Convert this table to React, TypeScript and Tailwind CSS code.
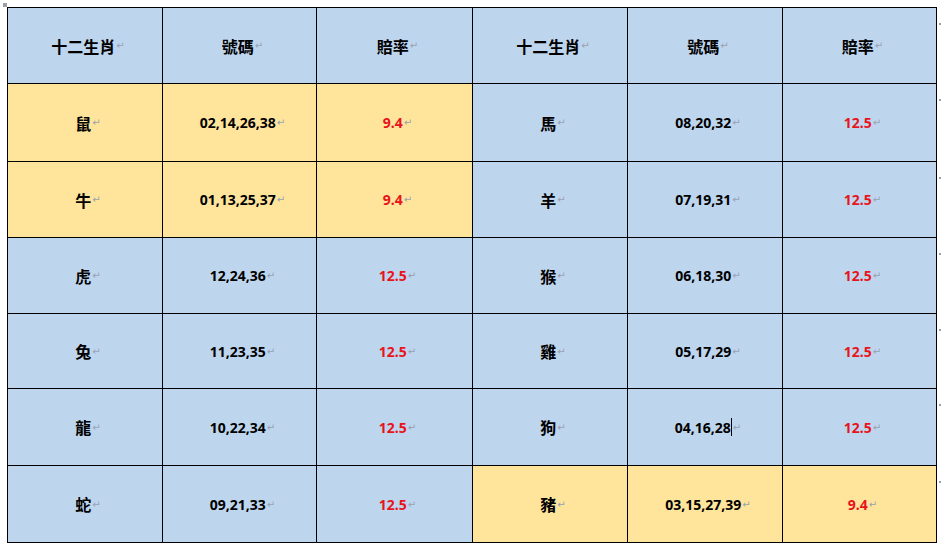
const BLUE = "bg-[#bed5ee]";
const GOLD = "bg-[#ffe59b]";

type Cell = { text: string; kind: "head" | "zodiac" | "nums" | "rate"; gold?: boolean; cursor?: boolean };

const header: Cell[] = [
  { text: "十二生肖", kind: "head" },
  { text: "號碼", kind: "head" },
  { text: "賠率", kind: "head" },
  { text: "十二生肖", kind: "head" },
  { text: "號碼", kind: "head" },
  { text: "賠率", kind: "head" },
];

const data: [string, string, string, boolean, string, string, string, boolean, boolean?][] = [
  ["鼠", "02,14,26,38", "9.4", true, "馬", "08,20,32", "12.5", false],
  ["牛", "01,13,25,37", "9.4", true, "羊", "07,19,31", "12.5", false],
  ["虎", "12,24,36", "12.5", false, "猴", "06,18,30", "12.5", false],
  ["兔", "11,23,35", "12.5", false, "雞", "05,17,29", "12.5", false],
  ["龍", "10,22,34", "12.5", false, "狗", "04,16,28", "12.5", false, true],
  ["蛇", "09,21,33", "12.5", false, "豬", "03,15,27,39", "9.4", true],
];

const rows: Cell[][] = [
  header,
  ...data.map(([z1, n1, r1, g1, z2, n2, r2, g2, cur]) => [
    { text: z1, kind: "zodiac" as const, gold: g1 },
    { text: n1, kind: "nums" as const, gold: g1 },
    { text: r1, kind: "rate" as const, gold: g1 },
    { text: z2, kind: "zodiac" as const, gold: g2 },
    { text: n2, kind: "nums" as const, gold: g2, cursor: cur },
    { text: r2, kind: "rate" as const, gold: g2 },
  ]),
];

// end-of-row marks to the right of the table
const markGaps = ["h-[76px]", "h-[78px]", "h-[76px]", "h-[76px]", "h-[75px]", "h-[77px]", "h-[77px]"];

function Mark() {
  return <span className="ml-[1px] text-[10px] font-normal text-gray-400 [font-family:'DejaVu_Sans',sans-serif]">↵</span>;
}

function TableCell({ cell }: { cell: Cell }) {
  const cjk = cell.kind === "head" || cell.kind === "zodiac";
  return (
    <div className={`flex items-center justify-center pl-[6px] ${cell.gold ? GOLD : BLUE}`}>
      <span
        className={
          cjk
            ? "text-[16px] font-bold text-black [font-family:'Noto_Sans_CJK_TC',sans-serif]"
            : `text-[14px] font-bold [font-family:'Noto_Sans',sans-serif] ${cell.kind === "rate" ? "text-[#e8141c]" : "text-black"}`
        }
      >
        {cell.text}
      </span>
      {cell.cursor && <span className="inline-block h-[18px] w-px bg-black" />}
      <Mark />
    </div>
  );
}

export default function App() {
  return (
    <div className="relative h-[544px] w-[941px] overflow-hidden bg-white">
      <div className="absolute left-[3px] top-[3px] h-[4px] w-[4px] bg-gray-400" />
      <div className="flex items-start pl-[7px] pt-[7px]">
        <div className="grid w-[930px] grid-cols-[154px_153px_155px_154px_154px_153px] grid-rows-[75px_77px_75px_75px_74px_76px_76px] gap-px bg-black p-px">
          {rows.map((row, ri) => row.map((cell, ci) => <TableCell key={`${ri}-${ci}`} cell={cell} />))}
        </div>
        <div className="flex flex-col pt-[16px]">
          {markGaps.map((h, i) => (
            <div key={i} className={`${h} pl-[2px]`}>
              <div className="h-[2px] w-[2px] bg-gray-400" />
            </div>
          ))}
        </div>
      </div>
    </div>
  );
}
